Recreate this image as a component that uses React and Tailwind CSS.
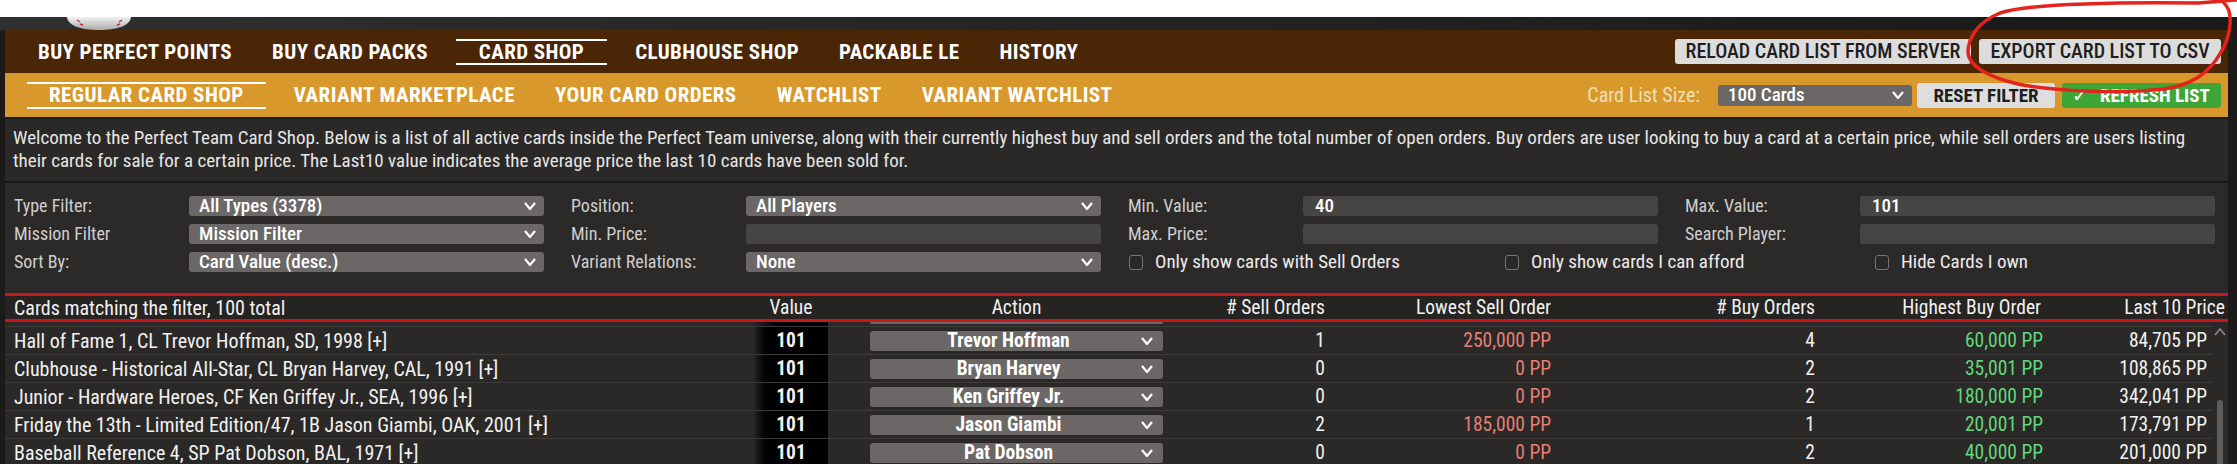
const mainTabs = ["BUY PERFECT POINTS", "BUY CARD PACKS", "CARD SHOP", "CLUBHOUSE SHOP", "PACKABLE LE", "HISTORY"];
const subTabs = ["REGULAR CARD SHOP", "VARIANT MARKETPLACE", "YOUR CARD ORDERS", "WATCHLIST", "VARIANT WATCHLIST"];

const rows = [
    { name: "Hall of Fame 1, CL Trevor Hoffman, SD, 1998 [+]", value: 101, player: "Trevor Hoffman", sell: 1, lowSell: "250,000 PP", buy: 4, highBuy: "60,000 PP", last10: "84,705 PP" },
    { name: "Clubhouse - Historical All-Star, CL Bryan Harvey, CAL, 1991 [+]", value: 101, player: "Bryan Harvey", sell: 0, lowSell: "0 PP", buy: 2, highBuy: "35,001 PP", last10: "108,865 PP" },
    { name: "Junior - Hardware Heroes, CF Ken Griffey Jr., SEA, 1996 [+]", value: 101, player: "Ken Griffey Jr.", sell: 0, lowSell: "0 PP", buy: 2, highBuy: "180,000 PP", last10: "342,041 PP" },
    { name: "Friday the 13th - Limited Edition/47, 1B Jason Giambi, OAK, 2001 [+]", value: 101, player: "Jason Giambi", sell: 2, lowSell: "185,000 PP", buy: 1, highBuy: "20,001 PP", last10: "173,791 PP" },
    { name: "Baseball Reference 4, SP Pat Dobson, BAL, 1971 [+]", value: 101, player: "Pat Dobson", sell: 0, lowSell: "0 PP", buy: 2, highBuy: "40,000 PP", last10: "201,000 PP" },
];

const Chevron = ({ className = "" }) => (
    <svg viewBox="0 0 12 8" className={`h-[8px] w-[12px] shrink-0 ${className}`} fill="none" stroke="currentColor" strokeWidth="2.2">
        <path d="M1 1l5 6 5-6" />
    </svg>
);

const Select = ({ label }) => (
    <div className="flex h-[20px] flex-1 items-center justify-between rounded-[3px] bg-[#6a6766] pl-[10px] pr-[8px] text-[19px] leading-[20px] font-medium text-white">
        <span>{label}</span>
        <Chevron />
    </div>
);

const Input = ({ value }) => (
    <div className="flex h-[20px] flex-1 items-center rounded-[3px] bg-[#474544] pl-[12px] text-[19px] leading-[20px] font-medium text-white">
        {value}
    </div>
);

const Field = ({ label, children }) => (
    <div className="flex h-[20px] items-center">
        <span className="w-[175px] shrink-0 text-[18px] leading-[20px] text-[#cfcfcf]">{label}</span>
        {children}
    </div>
);

const Check = ({ label, className = "" }) => (
    <div className={`flex items-center gap-[12px] ${className}`}>
        <span className="h-[15px] w-[14px] rounded-[3px] border border-[#767474] bg-[#2a2928]" />
        <span className="text-[19px] leading-[20px] text-[#ececec]">{label}</span>
    </div>
);

const Baseball = () => (
    <svg viewBox="0 0 64 13" className="ml-[67px] h-[13px] w-[64px]">
        <defs>
            <linearGradient id="ball" x1="0" y1="0" x2="0" y2="1">
                <stop offset="0" stopColor="#f2f2f2" />
                <stop offset="1" stopColor="#a9a9a9" />
            </linearGradient>
        </defs>
        <path d="M0 0C1 9 14 13 32 13S63 9 64 0Z" fill="url(#ball)" />
        <path d="M10 3l3 2M13 7l3 1M50 8l3-1M52 5l3-2" stroke="#c0302a" strokeWidth="1.4" />
    </svg>
);

export default function App() {
    return (
        <div className="relative h-[464px] w-[2237px] overflow-hidden bg-white font-['Roboto',sans-serif] [font-stretch:75%]">
            {/* window chrome strip */}
            <div className="h-[17px]" />
            <div className="flex h-[13px] bg-gradient-to-r from-[#2f2f2f] to-[#191919]">
                <Baseball />
            </div>

            <div className="flex h-[434px] bg-[#1c1b1a] pl-[5px] pr-[9px]">
                <div className="flex min-w-0 flex-1 flex-col overflow-hidden">
                    {/* main nav */}
                    <div className="flex h-[43px] shrink-0 items-center bg-[#4a2506] pl-[13px] pr-[7px] leading-[22px]">
                        {mainTabs.map((t) =>
                            t === "CARD SHOP" ? (
                                <div key={t} className="mx-[8px] flex h-[26px] items-center border-y-2 border-white px-[23px] text-[21px] font-bold tracking-[0.4px] text-white">
                                    {t}
                                </div>
                            ) : (
                                <div key={t} className="px-[20px] text-[21px] font-bold tracking-[0.4px] text-white">
                                    {t}
                                </div>
                            )
                        )}
                        <div className="ml-auto flex gap-[8px]">
                            <button className="h-[25px] w-[296px] rounded-[3px] bg-[#dcdcdc] text-[20px] leading-[25px] font-medium text-[#1e1e1e]">
                                RELOAD CARD LIST FROM SERVER
                            </button>
                            <button className="h-[25px] w-[242px] rounded-[3px] bg-[#dcdcdc] text-[20px] leading-[25px] font-medium text-[#1e1e1e]">
                                EXPORT CARD LIST TO CSV
                            </button>
                        </div>
                    </div>

                    {/* sub nav */}
                    <div className="flex h-[44px] shrink-0 items-center bg-[#d8982b] pl-[14px] pr-[7px] leading-[22px]">
                        {subTabs.map((t, i) =>
                            i === 0 ? (
                                <div key={t} className="mx-[8px] flex h-[27px] items-center border-y-2 border-white px-[22px] text-[21px] font-bold tracking-[0.45px] text-white">
                                    {t}
                                </div>
                            ) : (
                                <div key={t} className="px-[20px] text-[21px] font-bold tracking-[0.45px] text-white">
                                    {t}
                                </div>
                            )
                        )}
                        <div className="ml-auto flex items-center">
                            <span className="mr-[18px] text-[20px] text-[#f1dfb8]">Card List Size:</span>
                            <div className="flex h-[21px] w-[194px] items-center justify-between rounded-[3px] bg-[#6a6766] pl-[10px] pr-[8px] text-[19px] font-medium text-white">
                                <span>100 Cards</span>
                                <Chevron />
                            </div>
                            <button className="ml-[5px] h-[25px] w-[138px] rounded-[3px] bg-[#dedede] text-[19px] leading-[25px] font-bold text-[#1e1e1e]">
                                RESET FILTER
                            </button>
                            <button className="ml-[7px] flex h-[25px] w-[159px] items-center gap-[12px] rounded-[3px] bg-[#3ea637] pl-[10px] text-[19px] leading-[25px] font-bold text-white">
                                <span className="font-normal">✓</span>
                                REFRESH LIST
                            </button>
                        </div>
                    </div>

                    {/* description */}
                    <div className="mt-[2px] shrink-0 border-b-2 border-[#1b1a19] bg-[#2a2927] px-[8px] pt-[7px] pb-[9px] text-[19px] leading-[23px] text-[#e6e6e6]">
                        <p className="whitespace-nowrap">
                            Welcome to the Perfect Team Card Shop. Below is a list of all active cards inside the Perfect Team universe, along with their currently highest buy and sell orders and the total number of open orders. Buy orders are user looking to buy a card at a certain price, while sell orders are users listing
                        </p>
                        <p className="whitespace-nowrap">
                            their cards for sale for a certain price. The Last10 value indicates the average price the last 10 cards have been sold for.
                        </p>
                    </div>

                    {/* filters */}
                    <div className="grid shrink-0 grid-cols-4 gap-x-[27px] gap-y-[8px] bg-[#2c2a28] pt-[13px] pr-[13px] pb-[21px] pl-[9px]">
                        <Field label="Type Filter:"><Select label="All Types (3378)" /></Field>
                        <Field label="Position:"><Select label="All Players" /></Field>
                        <Field label="Min. Value:"><Input value="40" /></Field>
                        <Field label="Max. Value:"><Input value="101" /></Field>

                        <Field label="Mission Filter"><Select label="Mission Filter" /></Field>
                        <Field label="Min. Price:"><Input value="" /></Field>
                        <Field label="Max. Price:"><Input value="" /></Field>
                        <Field label="Search Player:"><Input value="" /></Field>

                        <Field label="Sort By:"><Select label="Card Value (desc.)" /></Field>
                        <Field label="Variant Relations:"><Select label="None" /></Field>
                        <div className="col-span-2 flex h-[20px] items-center pl-[1px]">
                            <Check label="Only show cards with Sell Orders" className="w-[376px]" />
                            <Check label="Only show cards I can afford" className="w-[370px]" />
                            <Check label="Hide Cards I own" />
                        </div>
                    </div>

                    {/* table */}
                    <div className="flex min-h-0 flex-1 flex-col bg-[#2a2927] text-[19.5px] leading-[22px] text-[#f2f2f2]">
                        <div className="flex h-[29px] shrink-0 items-center border-y-[3px] border-[#c9161c] bg-[#252423]">
                            <div className="w-[749px] pl-[9px] text-[20px]">Cards matching the filter, 100 total</div>
                            <div className="w-[74px] text-center">Value</div>
                            <div className="w-[42px]" />
                            <div className="w-[293px] text-center">Action</div>
                            <div className="w-[162px] text-right">{"# Sell Orders"}</div>
                            <div className="w-[226px] text-right">Lowest Sell Order</div>
                            <div className="w-[264px] text-right">{"# Buy Orders"}</div>
                            <div className="w-[226px] text-right">Highest Buy Order</div>
                            <div className="flex-1 pr-[3px] text-right">Last 10 Price</div>
                        </div>

                        <div className="flex min-h-0 flex-1">
                            <div className="flex w-[2207px] flex-col">
                                {/* partially scrolled row */}
                                <div className="flex h-[4px] shrink-0">
                                    <div className="w-[749px]" />
                                    <div className="w-[74px] bg-gradient-to-r from-[#262525] via-black to-black" />
                                    <div className="w-[42px]" />
                                    <div className="h-[2px] w-[293px] rounded-b-[3px] bg-[#6a6766]" />
                                </div>
                                {rows.map((r) => (
                                    <div key={r.name} className="flex h-[28px] shrink-0 items-stretch border-t border-[#3d3b39]">
                                        <div className="flex w-[749px] items-center pl-[9px] text-[20px]">{r.name}</div>
                                        <div className="flex w-[74px] items-center justify-center bg-gradient-to-r from-[#262525] via-black via-[25%] to-black font-bold">
                                            {r.value}
                                        </div>
                                        <div className="w-[42px]" />
                                        <div className="flex w-[293px] items-center">
                                            <div className="flex h-[20px] w-full items-center rounded-[3px] bg-[#6a6766] pr-[10px] font-bold text-white">
                                                <span className="flex-1 pl-[6px] text-center">{r.player}</span>
                                                <Chevron />
                                            </div>
                                        </div>
                                        <div className="flex w-[162px] items-center justify-end">{r.sell}</div>
                                        <div className="flex w-[226px] items-center justify-end text-[#e77f76]">{r.lowSell}</div>
                                        <div className="flex w-[264px] items-center justify-end">{r.buy}</div>
                                        <div className="flex w-[228px] items-center justify-end text-[#61d97c]">{r.highBuy}</div>
                                        <div className="flex flex-1 items-center justify-end pr-[5px]">{r.last10}</div>
                                    </div>
                                ))}
                            </div>
                            {/* scrollbar */}
                            <div className="flex flex-1 flex-col items-center pt-[6px]">
                                <svg viewBox="0 0 12 8" className="h-[8px] w-[12px] text-[#8a8a8a]" fill="none" stroke="currentColor" strokeWidth="1.6">
                                    <path d="M1 7l5-6 5 6" />
                                </svg>
                                <div className="mt-[64px] w-[6px] flex-1 rounded-t-[3px] bg-[#5e5c5a]" />
                            </div>
                        </div>
                    </div>
                </div>
            </div>

            {/* hand drawn annotation */}
            <svg viewBox="0 0 279 95" className="pointer-events-none absolute top-0 left-[1958px] h-[95px] w-[279px]" fill="none" stroke="#e3231c" strokeWidth="3.5" strokeLinecap="round" strokeLinejoin="round">
                <path d="M266 3C276 12 273 36 263 52C251 74 233 85 206 89C160 94 95 91 60 84C30 77 11 66 10 53C10 37 20 22 42 13C70 4 150 2 240 3L278 0" />
            </svg>
        </div>
    );
}
